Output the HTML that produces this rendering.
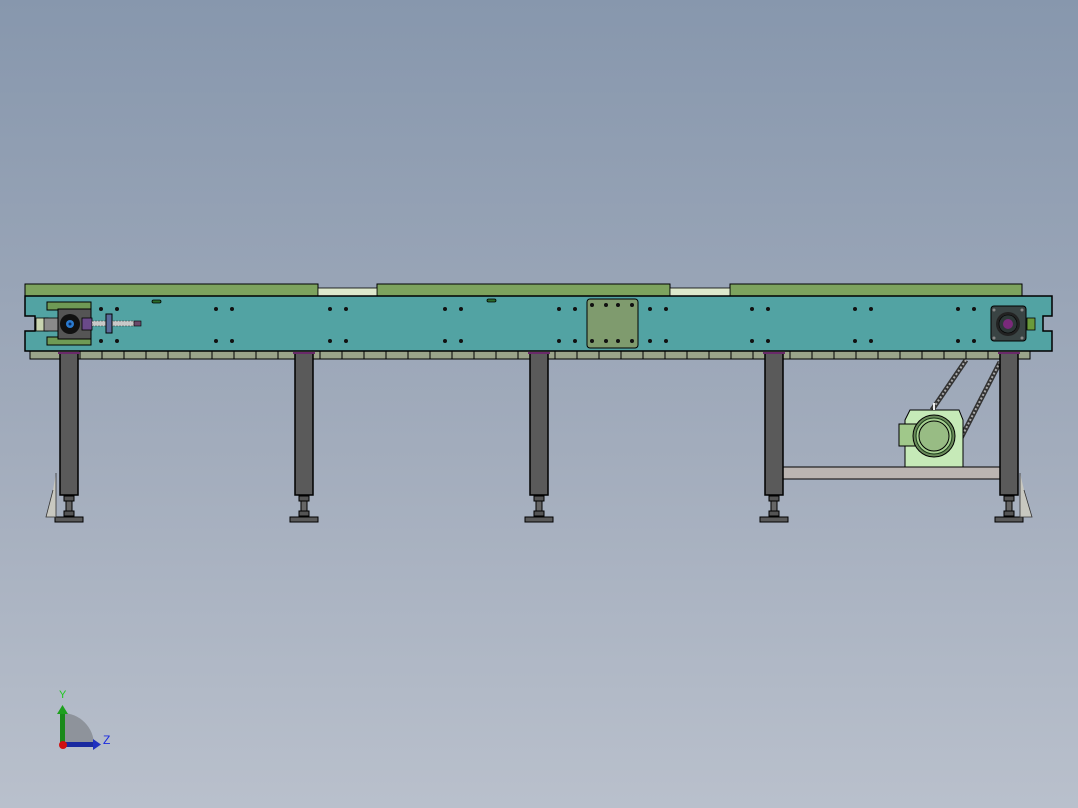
<!DOCTYPE html>
<html><head><meta charset="utf-8"><style>
html,body{margin:0;padding:0;width:1078px;height:808px;overflow:hidden}
body{background:linear-gradient(to bottom,#8797ad 0%,#a2acbc 55%,#b9c0cc 100%)}
svg{display:block}
</style></head><body>
<svg width="1078" height="808" viewBox="0 0 1078 808" xmlns="http://www.w3.org/2000/svg">
<defs>
<g id="leg">
  <rect x="0" y="353" width="18" height="142" fill="#5a5a5a" stroke="#000" stroke-width="1.5"/>
  <rect x="4" y="496" width="10" height="5" fill="#555" stroke="#000"/>
  <rect x="6" y="501" width="6" height="10" fill="#666" stroke="#000"/>
  <rect x="4" y="511" width="10" height="5" fill="#555" stroke="#000"/>
  <rect x="-5" y="517" width="28" height="5" fill="#5a5a5a" stroke="#000"/>
</g>
<g id="h"><circle r="2" fill="#111"/></g>
</defs>

<!-- top belts -->
<rect x="25" y="284" width="293" height="12" fill="#7da35e" stroke="#000"/>
<rect x="377" y="284" width="293" height="12" fill="#7da35e" stroke="#000"/>
<rect x="730" y="284" width="292" height="12" fill="#7da35e" stroke="#000"/>
<rect x="318" y="288" width="59" height="8" fill="#dde8cc" stroke="#000" stroke-width="0.8"/>
<rect x="670" y="288" width="60" height="8" fill="#dde8cc" stroke="#000" stroke-width="0.8"/>

<!-- bottom rail -->
<rect x="30" y="351" width="1000" height="8" fill="#9aa48a" stroke="#000"/>
<g stroke="#000" stroke-width="1">
<path d="M80 351v8M102 351v8M124 351v8M146 351v8M168 351v8M190 351v8M212 351v8M234 351v8M256 351v8M278 351v8M320 351v8M342 351v8M364 351v8M386 351v8M408 351v8M430 351v8M452 351v8M474 351v8M496 351v8M518 351v8M555 351v8M577 351v8M599 351v8M621 351v8M643 351v8M665 351v8M687 351v8M709 351v8M731 351v8M753 351v8M790 351v8M812 351v8M834 351v8M856 351v8M878 351v8M900 351v8M922 351v8M944 351v8M966 351v8M988 351v8"/>
</g>

<!-- main frame -->
<path d="M25 296H1052V316H1043V331H1052V351H25V331H35V316H25Z" fill="#52a3a3" stroke="#000" stroke-width="1.5"/>

<!-- holes -->
<g>
<use href="#h" x="101" y="309"/><use href="#h" x="117" y="309"/><use href="#h" x="101" y="341"/><use href="#h" x="117" y="341"/>
<use href="#h" x="216" y="309"/><use href="#h" x="232" y="309"/><use href="#h" x="216" y="341"/><use href="#h" x="232" y="341"/>
<use href="#h" x="330" y="309"/><use href="#h" x="346" y="309"/><use href="#h" x="330" y="341"/><use href="#h" x="346" y="341"/>
<use href="#h" x="445" y="309"/><use href="#h" x="461" y="309"/><use href="#h" x="445" y="341"/><use href="#h" x="461" y="341"/>
<use href="#h" x="559" y="309"/><use href="#h" x="575" y="309"/><use href="#h" x="559" y="341"/><use href="#h" x="575" y="341"/>
<use href="#h" x="650" y="309"/><use href="#h" x="666" y="309"/><use href="#h" x="650" y="341"/><use href="#h" x="666" y="341"/>
<use href="#h" x="752" y="309"/><use href="#h" x="768" y="309"/><use href="#h" x="752" y="341"/><use href="#h" x="768" y="341"/>
<use href="#h" x="855" y="309"/><use href="#h" x="871" y="309"/><use href="#h" x="855" y="341"/><use href="#h" x="871" y="341"/>
<use href="#h" x="958" y="309"/><use href="#h" x="974" y="309"/><use href="#h" x="958" y="341"/><use href="#h" x="974" y="341"/>
</g>
<rect x="152" y="300" width="9" height="3" rx="1.5" fill="#2a6a2a" stroke="#000" stroke-width="0.8"/>
<rect x="487" y="299" width="9" height="3" rx="1.5" fill="#2a6a2a" stroke="#000" stroke-width="0.8"/>

<!-- center plate -->
<rect x="587" y="299" width="51" height="49" rx="3" fill="#7f9b6e" stroke="#000"/>
<g><use href="#h" x="592" y="305"/><use href="#h" x="606" y="305"/><use href="#h" x="618" y="305"/><use href="#h" x="632" y="305"/>
<use href="#h" x="592" y="341"/><use href="#h" x="606" y="341"/><use href="#h" x="618" y="341"/><use href="#h" x="632" y="341"/></g>

<!-- left bearing assembly -->
<rect x="47" y="302" width="44" height="8" fill="#6f9a55" stroke="#000"/>
<rect x="47" y="337" width="44" height="8" fill="#6f9a55" stroke="#000"/>
<rect x="36" y="318" width="12" height="13" fill="#c8d4b0" stroke="#000" stroke-width="0.8"/>
<rect x="44" y="318" width="14" height="13" fill="#8a8a8a" stroke="#000" stroke-width="0.8"/>
<rect x="58" y="309" width="33" height="30" fill="#555" stroke="#000"/>
<circle cx="70" cy="324" r="10" fill="#111"/>
<circle cx="70" cy="324" r="4" fill="#2a7bd0"/>
<circle cx="70" cy="324" r="1.5" fill="#0a2a60"/>
<rect x="82" y="318" width="10" height="12" fill="#6a4a8a" stroke="#000" stroke-width="0.8"/>
<rect x="92" y="321" width="42" height="5" fill="#c8c8c8" stroke="#333" stroke-width="0.6" stroke-dasharray="2 1"/>
<rect x="106" y="314" width="6" height="19" fill="#5a6a9a" stroke="#000"/>
<rect x="134" y="321" width="7" height="5" fill="#6a4a6a" stroke="#000" stroke-width="0.6"/>

<!-- right bearing -->
<rect x="991" y="306" width="35" height="35" rx="3" fill="#3a4444" stroke="#000"/>
<circle cx="1008" cy="324" r="12" fill="#222"/>
<circle cx="1008" cy="324" r="9" fill="#2e3838" stroke="#000" stroke-width="0.6"/>
<circle cx="1008" cy="324" r="5" fill="#7a2a7a"/>
<circle cx="994" cy="310" r="1.5" fill="#888"/><circle cx="1022" cy="310" r="1.5" fill="#888"/>
<circle cx="994" cy="338" r="1.5" fill="#888"/><circle cx="1022" cy="338" r="1.5" fill="#888"/>
<rect x="1027" y="318" width="8" height="12" fill="#6a9a3a" stroke="#000" stroke-width="0.8"/>

<!-- chains -->
<path d="M966 360 L932 410" stroke="#333" stroke-width="5" fill="none"/>
<path d="M966 360 L932 410" stroke="#aaa" stroke-width="2" stroke-dasharray="2 2" fill="none"/>
<path d="M1000 362 L960 440" stroke="#333" stroke-width="5" fill="none"/>
<path d="M1000 362 L960 440" stroke="#aaa" stroke-width="2" stroke-dasharray="2 2" fill="none"/>

<!-- crossbar -->
<rect x="782" y="467" width="218" height="12" fill="#bbb5b2" stroke="#000"/>

<!-- legs -->
<use href="#leg" x="60"/>
<use href="#leg" x="295"/>
<use href="#leg" x="530"/>
<use href="#leg" x="765"/>
<use href="#leg" x="1000"/>
<!-- purple caps -->
<g fill="#6a2a6a"><rect x="58" y="352" width="22" height="2"/><rect x="293" y="352" width="22" height="2"/><rect x="528" y="352" width="22" height="2"/><rect x="763" y="352" width="22" height="2"/><rect x="998" y="352" width="22" height="2"/></g>

<!-- gusset feet -->
<path d="M56 473V517H46L53 490" fill="#c8c8c0" stroke="#333" stroke-width="0.8"/>
<path d="M1020 473V517H1032L1024 490" fill="#c8c8c0" stroke="#333" stroke-width="0.8"/>

<!-- motor -->
<path d="M910 410H959L963 420V467H905V420Z" fill="#c6eab8" stroke="#000"/>
<rect x="899" y="424" width="18" height="22" fill="#a0c88a" stroke="#000"/>
<circle cx="934" cy="436" r="21" fill="#6a8a5a" stroke="#000"/>
<circle cx="934" cy="436" r="18" fill="#a6d090" stroke="#1a3a1a"/>
<circle cx="934" cy="436" r="15" fill="#98bc84" stroke="#000"/>
<rect x="933" y="403" width="2" height="7" fill="#eee"/>

<!-- triad -->
<path d="M62 713 A32 32 0 0 1 94 745 H62Z" fill="#8e939b"/>
<rect x="60" y="713" width="5" height="32" fill="#1a8a1a"/>
<path d="M57 714 L62.5 705 L68 714Z" fill="#1ea01e"/>
<rect x="62" y="742" width="32" height="5" fill="#1a2aa0"/>
<path d="M93 739 L101 744.5 L93 750Z" fill="#2030c0"/>
<circle cx="63" cy="745" r="4" fill="#d01010"/>
<text x="59" y="698" font-family="Liberation Sans,sans-serif" font-size="11" fill="#1ec81e">Y</text>
<text x="103" y="744" font-family="Liberation Sans,sans-serif" font-size="12" fill="#1a2ae0">Z</text>
</svg>
</body></html>
